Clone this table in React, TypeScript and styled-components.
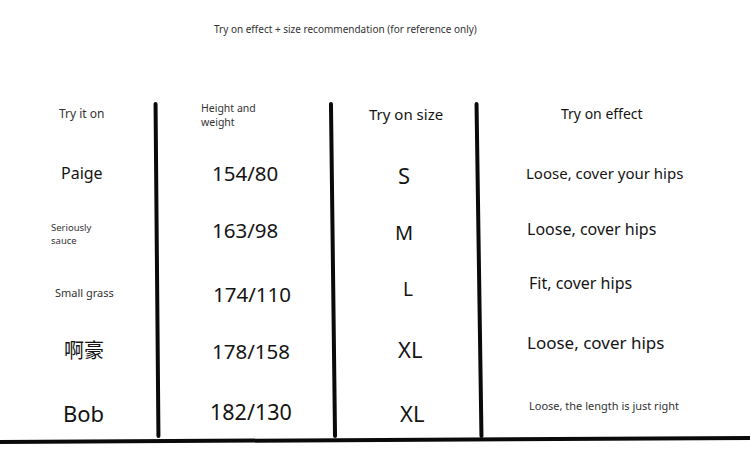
import React from 'react';
import styled, { createGlobalStyle } from 'styled-components';

const GlobalStyle = createGlobalStyle`
    html, body {
        margin: 0;
        padding: 0;
        background: #ffffff;
    }

    body {
        width: 750px;
        height: 458px;
        overflow: hidden;
        font-family: "Noto Sans", "Noto Sans CJK SC", sans-serif;
        color: #141414;
    }
`

const Page = styled.div`
    width: 750px;
    height: 458px;
    display: flex;
    flex-direction: column;
`

const Title = styled.div`
    padding: 21px 0 0 214px;
    height: 102px;
    box-sizing: border-box;
    font-size: 10px;
    line-height: 16px;
    color: #333;
`

const Table = styled.div`
    display: grid;
    grid-template-columns: 155px 4px 172px 4px 142px 4px 1fr;
    grid-template-rows: 42px 60px 58px 58px 60px 58px;
`

const Rule = styled.div<{ $col: number; $tilt: number }>`
    grid-column: ${props => props.$col};
    grid-row: 1 / -1;
    background: #0a0a0a;
    border-radius: 2px;
    transform: rotate(${props => -props.$tilt}deg);
`

const BottomRule = styled.div`
    height: 4px;
    background: #0a0a0a;
    transform: rotate(-0.3deg);
`

const Cell = styled.div<{ $col: number; $x: number; $dy?: number; $size: number; $muted?: boolean }>`
    grid-column: ${props => props.$col};
    display: flex;
    align-items: center;
    padding-left: ${props => props.$x}px;
    padding-top: ${props => Math.max(0, (props.$dy || 0) * 2)}px;
    padding-bottom: ${props => Math.max(0, -(props.$dy || 0) * 2)}px;
    font-size: ${props => props.$size}px;
    line-height: 1.2;
    color: ${props => props.$muted ? '#333' : '#141414'};
    white-space: nowrap;
`

const Lines = styled.div`
    display: flex;
    flex-direction: column;
    line-height: 1.37;
`

type CellData = { text: React.ReactNode; x: number; dy?: number; size: number; muted?: boolean };

const columns = [1, 3, 5, 7];

const rows: CellData[][] = [
    [
        { text: 'Try it on', x: 59, dy: -9, size: 12, muted: true },
        { text: <Lines><span>Height and</span><span>weight</span></Lines>, x: 42, dy: -8, size: 10.5, muted: true },
        { text: 'Try on size', x: 34, dy: -9, size: 15 },
        { text: 'Try on effect', x: 80, dy: -9, size: 14 },
    ],
    [
        { text: 'Paige', x: 61, dy: 0, size: 16 },
        { text: '154/80', x: 53, dy: -1, size: 20.5 },
        { text: 'S', x: 63, dy: 1, size: 22 },
        { text: 'Loose, cover your hips', x: 45, dy: -1, size: 15 },
    ],
    [
        { text: <Lines><span>Seriously</span><span>sauce</span></Lines>, x: 51, dy: 1, size: 9.5, muted: true },
        { text: '163/98', x: 53, dy: -3, size: 20.5 },
        { text: 'M', x: 60, dy: 0, size: 20 },
        { text: 'Loose, cover hips', x: 46, dy: -3, size: 16 },
    ],
    [
        { text: 'Small grass', x: 55, dy: 2, size: 11, muted: true },
        { text: '174/110', x: 54, dy: 3, size: 20.5 },
        { text: 'L', x: 68, dy: -2, size: 19 },
        { text: 'Fit, cover hips', x: 48, dy: -7, size: 16 },
    ],
    [
        { text: '啊豪', x: 64, dy: 1, size: 20 },
        { text: '178/158', x: 53, dy: 1, size: 20.5 },
        { text: 'XL', x: 63, dy: -1, size: 22 },
        { text: 'Loose, cover hips', x: 46, dy: -7, size: 17 },
    ],
    [
        { text: 'Bob', x: 63, dy: 4, size: 22 },
        { text: '182/130', x: 51, dy: 3, size: 21.5 },
        { text: 'XL', x: 65, dy: 4, size: 22 },
        { text: 'Loose, the length is just right', x: 48, dy: -3, size: 11, muted: true },
    ],
];

const App: React.FC = () => {
    return <>
        <GlobalStyle />
        <Page>
            <Title>Try on effect + size recommendation (for reference only)</Title>
            <Table>
                {rows.map((row, r) => row.map((cell, c) =>
                    <Cell key={`${r}-${c}`} style={{ gridRow: r + 1 }} $col={columns[c]} $x={cell.x} $dy={cell.dy} $size={cell.size} $muted={cell.muted}>
                        {cell.text}
                    </Cell>
                ))}
                <Rule $col={2} $tilt={0.5} />
                <Rule $col={4} $tilt={0.7} />
                <Rule $col={6} $tilt={0.85} />
            </Table>
            <BottomRule />
        </Page>
    </>
}

export default App;
